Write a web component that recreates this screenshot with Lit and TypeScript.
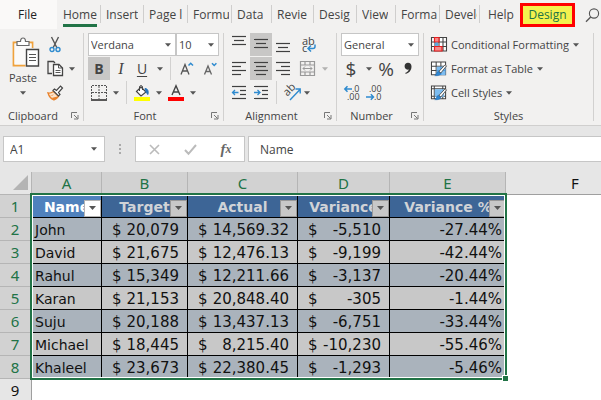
import { LitElement, html, svg, css, type TemplateResult } from "lit";
import { customElement, property } from "lit/decorators.js";
import { classMap } from "lit/directives/class-map.js";

const caret = html`<svg class="caret" width="6" height="4" viewBox="0 0 6 4"><path d="M0 0.3h6L3 3.8z" fill="#555"/></svg>`;

const lines = (rows: Array<[number, number, number]>) =>
  svg`${rows.map(([x, y, w]) => svg`<path d="M${x} ${y}.5h${w}" stroke="#404040" stroke-width="1.2" fill="none"/>`)}`;

const icon = (w: number, h: number, body: unknown) =>
  html`<svg width=${w} height=${h} viewBox="0 0 ${w} ${h}" fill="none" aria-hidden="true">${body}</svg>`;

const brushOverlay = svg`
  <path d="M4 15c2-.5 1.500-4 4-4.500l2.500 2c0 2-3.500 3-6.500 2.500z" fill="#2e86d1" stroke="#1e6fb8" stroke-width=".6"/>
  <path d="M8.500 10.500L15 3.500l1.500 1.200-6 7.500z" fill="#fff" stroke="#444" stroke-width=".9"/>`;

const icons: Record<string, TemplateResult> = {
  paste: icon(28, 31, svg`
    <path d="M7 5.500H1.500v23h12M16 5.500h4.500V11" stroke="#f0a23c" stroke-width="1.800"/>
    <path d="M2.500 6.500h17V27.500h-17z" fill="#fbfaf9"/>
    <path d="M5 8.500v-4h3.500C8.500 2.200 9.600 1 11 1s2.500 1.200 2.500 3.500H17v4z" fill="#fff" stroke="#6a6a6a" stroke-width="1.200"/>
    <path d="M14.500 12.500h12v16.500h-12z" fill="#fff" stroke="#444" stroke-width="1.400"/>
    <path d="M17 17.500h7M17 20.500h7M17 23.500h7" stroke="#555"/>`),
  cut: icon(12, 17, svg`
    <path d="M2.500 1l5.500 11M9.500 1L4 12" stroke="#555" stroke-width="1.400"/>
    <circle cx="3" cy="13.500" r="2" stroke="#2f8bcf" stroke-width="1.400"/><circle cx="9" cy="13.500" r="2" stroke="#2f8bcf" stroke-width="1.400"/>`),
  copy: icon(17, 17, svg`
    <path d="M5 13.500H1V1.500h5.500L8 3" stroke="#444" stroke-width="1.300"/>
    <path d="M6.500 4.500h5.500l3.500 3.500v7.500h-9z" fill="#fff" stroke="#444" stroke-width="1.300"/>
    <path d="M11.500 4.500V8h4M8.500 10.500h5M8.500 12.500h5" stroke="#444" stroke-width=".9"/>`),
  painter: icon(17, 16, svg`
    <path d="M1 8c2 .5 4-.5 5.500-1.500l5 5c-1 1.500-3 3-4.500 3.500C4.500 14 2 11.500 1 8z" fill="#fbe3cb" stroke="#e9822b" stroke-width="1.300"/>
    <path d="M2.500 10.500c1.500 0 3 .5 4.500-1M4.500 13l8-2-5 4z" fill="#e9822b"/>
    <path d="M6 5.500l1.500-1.500 2 1.500L13.500 1l2 2L11.500 7.500 13 9.500 11.500 11z" fill="#fff" stroke="#444" stroke-width="1.200"/>`),
  grow: icon(14, 14, svg`<path d="M1 12.500L5 2.500l4 10M2.500 9h5" stroke="#555" stroke-width="1.300"/><path d="M8.500 3.500l2.200-2.300L13 3.500" stroke="#2f8bcf" stroke-width="1.500"/>`),
  shrink: icon(14, 14, svg`<path d="M1.500 12.500L5 4l3.500 8.500M2.800 9.500h4.400" stroke="#666" stroke-width="1.300"/><path d="M9 1.200L11.200 3.500l2.200-2.300" stroke="#2f8bcf" stroke-width="1.500"/>`),
  borders: icon(16, 16, svg`
    <path d="M.5 1v13M15.500 1v13M8 1v13M1 .5h14M1 7.500h14" stroke="#555" stroke-dasharray="2 1"/>
    <path d="M0 15h16" stroke="#333" stroke-width="1.600"/>`),
  fill: icon(16, 16, svg`
    <path d="M2.500 6.500L7 2l5 5-5 4z" fill="#fff" stroke="#444" stroke-width="1.200"/><path d="M5.500 6V2c0-1.800 3-1.800 3 0v3" stroke="#444"/>
    <path d="M11 3.500c3 .3 3.500 2.500 3 6-1.500-1-2.500-3-3-6z" fill="#2673b8" stroke="#2673b8"/>
    <path d="M0 12h16v4H0z" fill="#ff0"/>`),
  fontColor: icon(16, 16, svg`<path d="M4 10L8 .8 12 10M5.200 7h5.600" stroke="#444" stroke-width="1.400"/><path d="M0 12h16v4H0z" fill="#f00"/>`),
  top: icon(14, 17, lines([[0, 0, 14], [2, 4, 10], [0, 8, 14]])),
  middle: icon(14, 17, lines([[0, 3, 14], [2, 7, 10], [0, 11, 14]])),
  bottom: icon(14, 17, lines([[0, 7, 14], [2, 11, 10], [0, 15, 14]])),
  left: icon(14, 15, lines([[0, 1, 14], [0, 5, 9], [0, 9, 14], [0, 13, 9]])),
  center: icon(14, 15, lines([[0, 1, 14], [2, 5, 10], [0, 9, 14], [2, 13, 10]])),
  right: icon(14, 15, lines([[0, 1, 14], [5, 5, 9], [0, 9, 14], [5, 13, 9]])),
  outdent: icon(14, 15, svg`${lines([[0, 1, 14], [8, 5, 6], [8, 9, 6], [0, 13, 14]])}<path d="M6.500 7.500h-6M3 5L.5 7.500 3 10" stroke="#2f8bcf" stroke-width="1.300"/>`),
  indent: icon(14, 15, svg`${lines([[0, 1, 14], [8, 5, 6], [8, 9, 6], [0, 13, 14]])}<path d="M0 7.500h6M3.500 5L6 7.500 3.500 10" stroke="#2f8bcf" stroke-width="1.300"/>`),
  wrap: icon(16, 18, svg`
    <text x="1" y="9" class="t11">ab</text><text x="1" y="16" class="t11">c</text>
    <path d="M14 8.500v2c0 1.500-.5 2-2 2H7.500M10 9.500l-3 3 3 3" stroke="#2f8bcf" stroke-width="1.500"/>`),
  merge: icon(16, 16, svg`<path d="M.5.5h14v14H.5zM.5 4h14M.5 11h14M5 .5V4M10 .5V4M5 11v3.500M10 11v3.500" stroke="#999" stroke-width="1.200"/><path d="M3 7.500h9M5 5.500l-2 2 2 2M10 5.500l2 2-2 2" stroke="#999"/>`),
  orient: icon(18, 17, svg`
    <g transform="rotate(-45 6 7)"><text x="0" y="9" class="t11">ab</text></g>
    <path d="M6 16L16 5.500M11.500 5H16.200V9.500" stroke="#2f8bcf" stroke-width="1.400"/>`),
  incDec: icon(16, 16, svg`<text x="8" y="7" class="t9">.0</text><text x="3" y="15" class="t9">.00</text><path d="M8 4H.8M3.500 1.200L.8 4l2.700 2.800" stroke="#2f8bcf" stroke-width="1.500"/>`),
  decDec: icon(16, 16, svg`<text x="3" y="7" class="t9">.00</text><text x="8" y="15" class="t9">.0</text><path d="M0 12h7.500M4.800 9.200L7.500 12l-2.700 2.800" stroke="#2f8bcf" stroke-width="1.500"/>`),
  comma: icon(8, 13, svg`<path d="M4 .8c2.200 0 3.500 1.400 3.500 3.700C7.500 8.500 5 11 1.500 12v-1.200C3.500 10 4.500 8.800 4.700 7.500 2 8.200.6 6.300.6 4.300.6 2.300 2 .8 4 .8z" fill="#333"/>`),
  conditional: icon(16, 15, svg`
    <path d="M.5.5h15v13.500H.5zM.5 5h15M.5 9.500h15M4 .5V14M8 .5V14M12 .5V14" fill="#fff" stroke="#444" stroke-width="1.100"/>
    <path d="M3.500.5H8V5H3.500zM3.500 9.500h7.500V14H3.500z" fill="#f58a8a" stroke="#e82020" stroke-width="1.200"/><path d="M4 5.600h3v3.300H4z" fill="#5aa7e0"/>`),
  formatTable: icon(17, 16, svg`
    <path d="M.5.5h15v13.500H.5zM.5 5h15M.5 9.500h15M5.500.5V14M10.500.5V14" fill="#fff" stroke="#444" stroke-width="1.100"/>
    <path d="M6 5.500h9.500v9H6z" fill="#7cbcf0"/><path d="M6 9.500h9.500M10.500 5.500v9" stroke="#4a9ade"/>${brushOverlay}`),
  cellStyles: icon(17, 16, svg`
    <path d="M.5.5h15v13.500H.5zM.5 3.500h15M.5 11.500h15M3.500.5V14M12.500.5V14" fill="#fff" stroke="#444" stroke-width="1.100"/>
    <path d="M4 4h10v8H4z" fill="#7cbcf0"/>${brushOverlay}`),
  launcher: icon(8, 8, svg`<path d="M.5 6V.5H6M3 3l3.500 3.500M7 3v4H3" stroke="#777"/>`),
  search: icon(15, 15, svg`<circle cx="9" cy="5.500" r="4.600" stroke="#555" stroke-width="1.100"/><path d="M5.700 9L1 13.800" stroke="#555" stroke-width="1.300"/>`),
  cancel: icon(11, 11, svg`<path d="M1 1l9 9M10 1l-9 9" stroke="#bbb" stroke-width="1.600"/>`),
  enter: icon(13, 11, svg`<path d="M1 6l3.500 3.800L12 1" stroke="#bbb" stroke-width="2"/>`),
};

const shared = css`
  * { box-sizing: border-box; }
  button, select, input {
    font: inherit; color: inherit; margin: 0; padding: 0;
    border: 0; border-radius: 0; background: none; outline: 0;
  }
  button { display: flex; align-items: center; justify-content: center; white-space: nowrap; }
  svg { display: block; flex: none; overflow: visible; }
  .t9, .t11 { fill: #444; font-family: "Open Sans", sans-serif; }
  .t9 { font-size: 9px; }
  .t11 { font-size: 11px; }
`;

@customElement("ribbon-tabs")
class RibbonTabs extends LitElement {
  static styles = [shared, css`
    :host { display: block; background: #f2f1f0; }
    .tabs {
      display: grid; height: 30px; color: #444; font-size: 12px;
      grid-template-columns: 57px 44fr 43fr 44fr 44fr 40fr 42fr 43fr 39fr 44fr 40fr 40fr 55px 26px;
    }
    .tab { height: 30px; justify-content: flex-start; padding-left: 5px; padding-right: 3px; min-width: 0; position: relative; }
    .clip { overflow: hidden; min-width: 0; height: 24px; line-height: 23px; border-bottom: 3px solid transparent; }
    .tab:not(.last)::after { content: ""; position: absolute; right: 0; top: 5px; height: 18px; border-right: 1px solid #cfcecd; }
    .active { padding-left: 6px; }
    .active .clip { border-color: #217346; }
    .last { padding-left: 8px; padding-right: 0; }
    .file { background: #faf9f8; height: 29px; color: #222; padding-right: 2px; }
    .design { height: 24px; margin-top: 3px; border: 3px solid #f00; background: #f4f14e; color: #217346; line-height: 16px; padding-bottom: 1px; }
    .search { justify-content: flex-start; padding-left: 10px; }
  `];
  render() {
    const names = ["Home", "Insert", "Page l", "Formu", "Data", "Revie", "Desig", "View", "Forma", "Develo", "Help"];
    return html`<nav class="tabs">
      <button class="file">File</button>
      ${names.map((n, i) => html`<button class=${classMap({ tab: true, active: i === 0, last: i === 10 })}><span class="clip">${n}</span></button>`)}
      <button class="design">Design</button>
      <button class="search" aria-label="Search">${icons.search}</button>
    </nav>`;
  }
}

@customElement("ribbon-bar")
class RibbonBar extends LitElement {
  static styles = [shared, css`
    :host { display: block; background: #f2f1f0; border-bottom: 1px solid #d0cfce; font-size: 11px; color: #444; }
    .bar { display: flex; padding: 3px 0 4px; }
    .group { display: flex; flex-direction: column; border-right: 1px solid #d2d1d0; }
    .tools { display: flex; flex-direction: column; gap: 1px; padding: 0 4px; height: 78px; }
    .foot { display: flex; align-items: center; height: 10px; line-height: 10px; }
    .name { flex: 1; text-align: center; }
    .launch { width: 17px; }
    .row { display: grid; height: 23px; }
    .row > * { height: 23px; min-width: 0; }
    .on { background: #c8c7c6; }
    .bold { font-weight: 700; font-size: 14px; }
    .italic { font-style: italic; font-family: "Liberation Serif", serif; font-size: 16px; }
    .under { text-decoration: underline; text-underline-offset: 2px; font-size: 14px; }
    .sign { font-size: 19px; line-height: 20px; }
    .sep { justify-self: center; border-left: 1px solid #d2d1d0; }
    .faint { opacity: .4; }
    .combo { display: grid; align-items: center; border: 1px solid #c6c6c6; background: #fff; }
    .combo > * { grid-area: 1 / 1; }
    .combo select { appearance: none; width: 100%; padding-left: 2px; height: 21px; }
    .combo .caret { justify-self: end; margin-right: 4px; pointer-events: none; }
    .f1 { grid-template-columns: 88px 43px; }
    .f2 { grid-template-columns: 22px 22px 20px 15px 7px 26px 19px; }
    .f3 { grid-template-columns: 22px 11px 11px 20px 13px 22px 11px; }
    .a1 { grid-template-columns: 22px 22px 22px 30px; }
    .a2 { grid-template-columns: 22px 22px 22px 27px 7px; }
    .a3 { grid-template-columns: 22px 22px 9px 23px 6px; }
    .n1 { grid-template-columns: 78px; }
    .n2 { grid-template-columns: 20px 15px 20px 24px; }
    .n3 { grid-template-columns: 21px 23px; }
    .clipboard { width: 84px; }
    .font { width: 140px; }
    .align { width: 113px; }
    .number { width: 87px; }
    .styles { flex: 1; }
    .next { width: 7px; }
    .board { flex-direction: row; padding: 0; gap: 0; }
    .paste { width: 46px; flex-direction: column; justify-content: flex-start; padding-top: 4px; gap: 2px; line-height: 15px; }
    .side { display: grid; grid-template-columns: 18px 15px; grid-auto-rows: 23px; row-gap: 1px; }
    .side .wide { grid-column: 1; }
    .paste svg:first-child { margin-left: 5px; }
    .paste .caret { margin-top: 4px; }
    .style { justify-content: flex-start; gap: 4px; height: 23px; padding-left: 3px; align-self: flex-start; line-height: 16px; }
    .style svg:first-child { width: 16px; }
  `];
  private group(cls: string, name: string, body: TemplateResult, launch = true) {
    return html`<section class="group ${cls}" aria-label=${name}>${body}
      <div class="foot"><span class="name">${name}</span>${launch ? html`<button class="launch" aria-label="${name} settings">${icons.launcher}</button>` : ""}</div>
    </section>`;
  }
  private tool(label: string, body: unknown, cls = "") {
    return html`<button class=${cls} aria-label=${label}>${body}</button>`;
  }
  private combo(label: string, value: string) {
    return html`<div class="combo"><select aria-label=${label}><option>${value}</option></select>${caret}</div>`;
  }
  render() {
    const t = this.tool;
    const sep = html`<span class="sep"></span>`;
    const more = (label: string, cls = "") => t(label, caret, cls);
    return html`<div class="bar">
      ${this.group("clipboard", "Clipboard", html`<div class="tools board">
        <button class="paste">${icons.paste}<span>Paste</span>${caret}</button>
        <div class="side">
          ${t("Cut", icons.cut, "wide")}
          ${t("Copy", icons.copy, "wide")}${more("Copy options")}
          ${t("Format Painter", icons.painter, "wide")}
        </div></div>`)}
      ${this.group("font", "Font", html`<div class="tools">
        <div class="row f1">${this.combo("Font", "Verdana")}${this.combo("Font size", "10")}</div>
        <div class="row f2">${t("Bold", "B", "bold on")}${t("Italic", "I", "italic")}${t("Underline", "U", "under")}${more("Underline options")}${sep}${t("Increase font size", icons.grow)}${t("Decrease font size", icons.shrink)}</div>
        <div class="row f3">${t("Borders", icons.borders)}${more("Border options")}${sep}${t("Fill color", icons.fill)}${more("Fill options")}${t("Font color", icons.fontColor)}${more("Font color options")}</div>
      </div>`)}
      ${this.group("align", "Alignment", html`<div class="tools">
        <div class="row a1">${t("Top align", icons.top)}${t("Middle align", icons.middle, "on")}${t("Bottom align", icons.bottom)}${t("Wrap text", icons.wrap)}</div>
        <div class="row a2">${t("Align left", icons.left)}${t("Center", icons.center, "on")}${t("Align right", icons.right)}${t("Merge", icons.merge)}${more("Merge options", "faint")}</div>
        <div class="row a3">${t("Decrease indent", icons.outdent)}${t("Increase indent", icons.indent)}${sep}${t("Orientation", icons.orient)}${more("Orientation options")}</div>
      </div>`)}
      ${this.group("number", "Number", html`<div class="tools">
        <div class="row n1">${this.combo("Number format", "General")}</div>
        <div class="row n2">${t("Currency", "$", "sign")}${more("Currency options")}${t("Percent", "%", "sign")}${t("Comma style", icons.comma)}</div>
        <div class="row n3">${t("Increase decimal", icons.incDec)}${t("Decrease decimal", icons.decDec)}</div>
      </div>`)}
      ${this.group("styles", "Styles", html`<div class="tools">
        <button class="style">${icons.conditional}<span>Conditional Formatting</span>${caret}</button>
        <button class="style">${icons.formatTable}<span>Format as Table</span>${caret}</button>
        <button class="style">${icons.cellStyles}<span>Cell Styles</span>${caret}</button>
      </div>`, false)}
      <div class="next"></div>
    </div>`;
  }
}

@customElement("formula-bar")
class FormulaBar extends LitElement {
  static styles = [shared, css`
    :host { display: block; font-size: 12px; color: #444; }
    .bar { display: flex; padding: 10px 0 10px 3px; }
    .box { display: flex; align-items: center; height: 26px; background: #fff; border: 1px solid #c6c6c6; }
    .cell { width: 102px; padding: 0 7px 0 6px; }
    .cell input { flex: 1; min-width: 0; }
    .dots { width: 30px; display: flex; flex-direction: column; align-items: center; justify-content: center; gap: 2px; }
    .dot { width: 2px; height: 2px; background: #aaa; }
    .actions { width: 110px; }
    .actions button { flex: 1; height: 24px; }
    .fx { font: italic 700 15px "Liberation Serif", serif; color: #666; }
    .small { font-size: 12px; }
    .entry { flex: 1; margin-left: 3px; border-right: 0; padding-left: 11px; }
    .entry input { width: 100%; }
  `];
  render() {
    return html`<div class="bar">
      <div class="box cell"><input aria-label="Name box" value="A1">${caret}</div>
      <div class="dots">${[0, 1, 2].map(() => html`<span class="dot"></span>`)}</div>
      <div class="box actions">
        <button aria-label="Cancel">${icons.cancel}</button>
        <button aria-label="Enter">${icons.enter}</button>
        <button class="fx" aria-label="Insert function">f<span class="small">x</span></button>
      </div>
      <div class="box entry"><input aria-label="Formula" value="Name"></div>
    </div>`;
  }
}

type Row = [string, string, string, string, string];

@customElement("work-sheet")
class WorkSheet extends LitElement {
  @property({ attribute: false }) rows: Row[] = [];
  static styles = [shared, css`
    :host { display: block; flex: 1; position: relative; background: #fff; font-family: "DejaVu Sans", sans-serif; color: #111; }
    table { table-layout: fixed; width: 100%; min-width: 644px; border-collapse: separate; border-spacing: 0; }
    th, td { padding: 0; height: 23px; line-height: 22px; font-weight: 400; overflow: hidden; white-space: nowrap; }
    .w0 { width: 32px; } .wa { width: 70px; } .wb { width: 86px; } .wc { width: 110px; } .wd { width: 92px; } .we { width: 116px; }
    .head { font-family: "Noto Sans", sans-serif; font-size: 15px; background: #e6e6e6; border: 0 solid #9f9f9f; border-bottom-width: 1px; text-align: center; line-height: 20px; padding-bottom: 1px; }
    .col { border-right: 1px solid #b5b5b5; }
    .sel { background: #d2d2d2; color: #217346; }
    .row { border-right-width: 1px; border-bottom-color: #b5b5b5; padding-right: 1px; }
    .corner { background: #e6e6e6; border-right: 1px solid #b5b5b5; border-bottom-color: #b5b5b5; }
    .corner svg { margin-left: 13px; }
    .title, .data { border-right: 1px solid #000; border-bottom: 1px solid #000; }
    .end { border-right: 0; }
    .title { background: #3d6596; color: #d0d3d7; font-weight: 700; font-size: 14px; }
    .first { background: #4f81bd; color: #fff; }
    .wrap { display: grid; grid-template-columns: 100%; align-items: center; height: 22px; }
    .wrap > * { grid-area: 1 / 1; }
    .text { justify-self: center; line-height: 20px; padding-top: 2px; }
    .filter { justify-self: end; width: 17px; height: 17px; margin-top: 4px; background: #c8c8c8; border: 1px solid #999; }
    .first .filter { background: #fff; border-color: #b5b5b5; }
    .data { background: #c8c8c8; font-size: 15px; line-height: 20px; padding-top: 2px; }
    .band { background: #aab3bc; }
    .label { font-size: 14px; padding-left: 3px; }
    .money { display: flex; justify-content: space-between; padding: 0 8px 0 10px; }
    .pct { text-align: right; padding-right: 4px; }
    .selection { position: absolute; left: 30px; top: 21px; width: 477px; height: 187px; border: 2px solid #217346; box-shadow: inset 0 0 0 1px #fff; pointer-events: none; }
    .handle { position: absolute; right: -4px; bottom: -4px; width: 7px; height: 7px; background: #217346; border: 1px solid #fff; }
  `];
  private money(v: string) {
    return html`<div class="money"><span>$</span><span>${v}</span></div>`;
  }
  render() {
    const titles = ["Name", "Target", "Actual", "Variance", "Variance %"];
    return html`<table>
      <colgroup><col class="w0"><col class="wa"><col class="wb"><col class="wc"><col class="wd"><col class="we"><col></colgroup>
      <thead><tr>
        <th class="head corner" aria-label="Select all">${icon(15, 15, svg`<path d="M15 0v15H0z" fill="#b4b4b4"/>`)}</th>
        ${["A", "B", "C", "D", "E"].map((c) => html`<th class="head col sel">${c}</th>`)}
        <th class="head">F</th>
      </tr></thead>
      <tbody>
        <tr><th class="head row sel">1</th>
          ${titles.map((t, i) => html`<th class=${classMap({ title: true, first: i === 0, end: i === 4 })}>
            <div class="wrap"><span class="text">${t}</span><button class="filter" aria-label="Filter ${t}">${icon(7, 4, svg`<path d="M0 0h7L3.500 4z" fill="#555"/>`)}</button></div></th>`)}
          <td></td></tr>
        ${this.rows.map((r, i) => {
          const b = i % 2 ? "data" : "data band";
          return html`<tr><th class="head row sel">${i + 2}</th>
            <td class="${b} label">${r[0]}</td>
            <td class=${b}>${this.money(r[1])}</td>
            <td class=${b}>${this.money(r[2])}</td>
            <td class=${b}>${this.money(r[3])}</td>
            <td class="${b} end pct">${r[4]}</td><td></td></tr>`;
        })}
        <tr><th class="head row">9</th><td colspan="6"></td></tr>
      </tbody></table>
      <div class="selection"><span class="handle"></span></div>`;
  }
}

@customElement("app-root")
class AppRoot extends LitElement {
  static styles = css`
    :host { display: flex; flex-direction: column; height: 100vh; overflow: hidden; background: #e6e6e6; font-family: "Open Sans", "Noto Sans", sans-serif; }
  `;
  private rows: Row[] = [
    ["John", "20,079", "14,569.32", "-5,510", "-27.44%"],
    ["David", "21,675", "12,476.13", "-9,199", "-42.44%"],
    ["Rahul", "15,349", "12,211.66", "-3,137", "-20.44%"],
    ["Karan", "21,153", "20,848.40", "-305", "-1.44%"],
    ["Suju", "20,188", "13,437.13", "-6,751", "-33.44%"],
    ["Michael", "18,445", "8,215.40", "-10,230", "-55.46%"],
    ["Khaleel", "23,673", "22,380.45", "-1,293", "-5.46%"],
  ];
  render() {
    return html`<ribbon-tabs></ribbon-tabs><ribbon-bar></ribbon-bar><formula-bar></formula-bar><work-sheet .rows=${this.rows}></work-sheet>`;
  }
}
